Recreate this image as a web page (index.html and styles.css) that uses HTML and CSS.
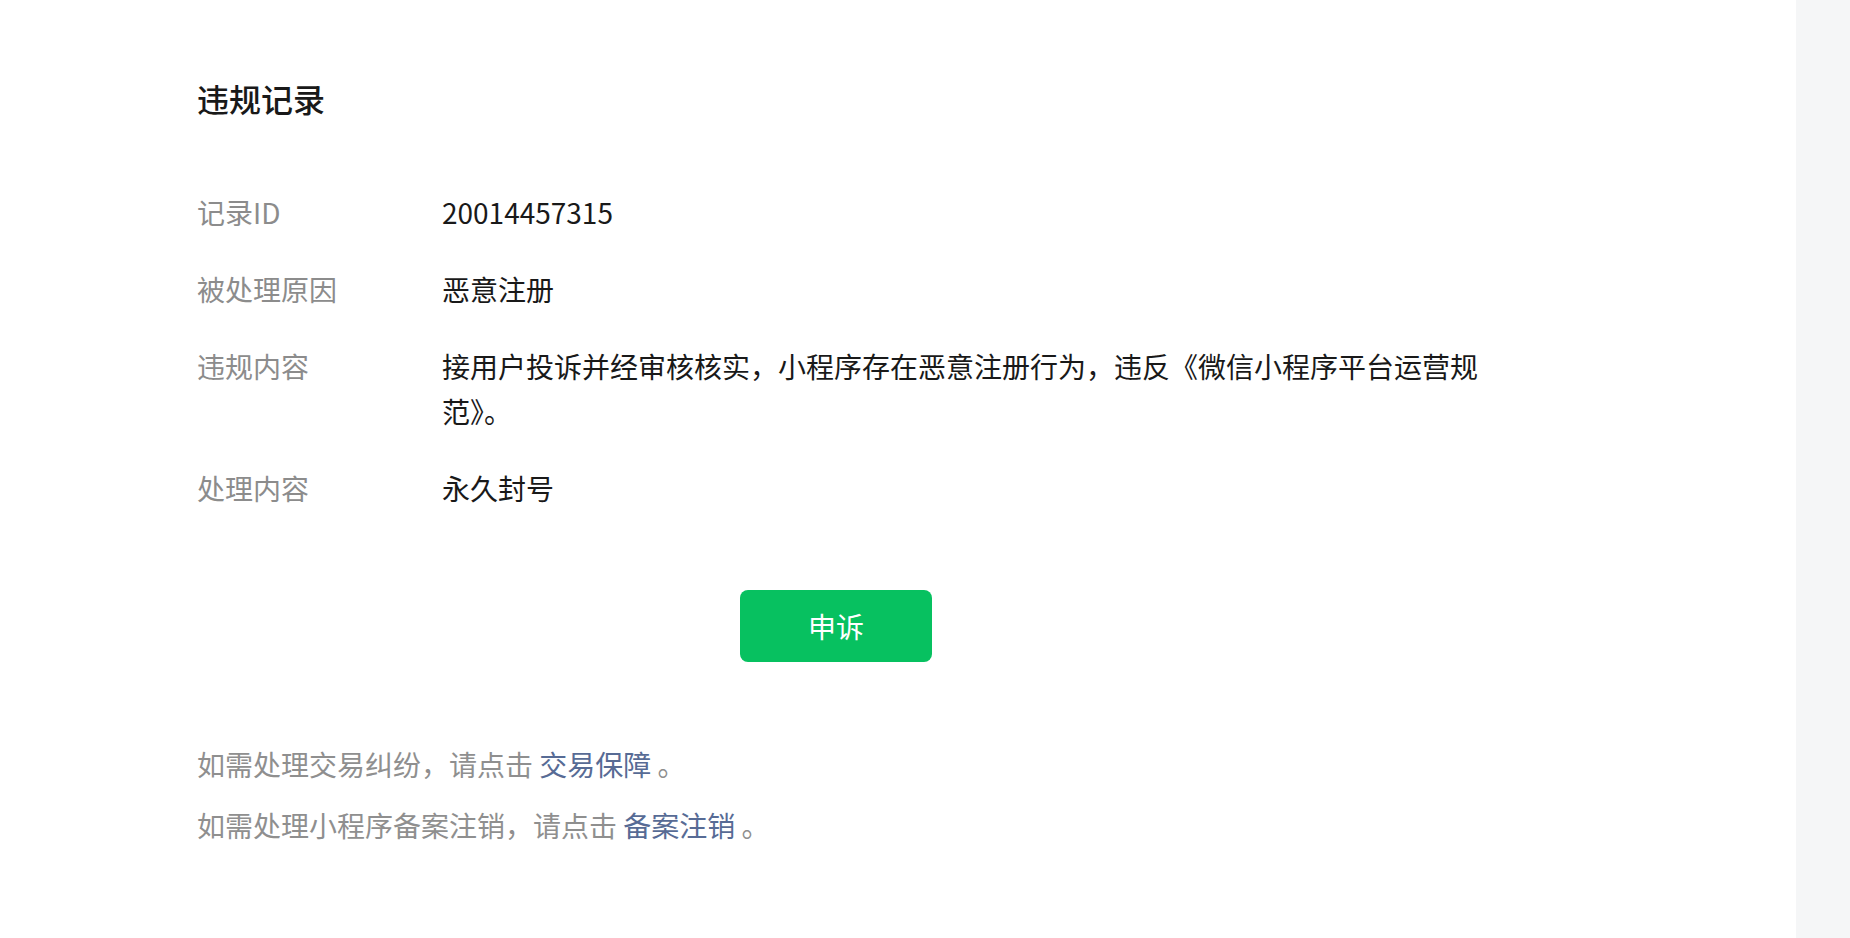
FILE: index.html
```html
<!DOCTYPE html>
<html lang="zh-CN">
<head>
    <meta charset="UTF-8">
    <meta name="viewport" content="width=device-width, initial-scale=1.0">
    <title>违规记录</title>
    <link rel="stylesheet" href="styles.css">
</head>
<body>
    <div class="page">
        <div class="main">
            <div class="content">
                <h2 class="title">违规记录</h2>

                <div class="info">
                    <div class="info-row">
                        <span class="label">记录ID</span>
                        <span class="value">20014457315</span>
                    </div>
                    <div class="info-row">
                        <span class="label">被处理原因</span>
                        <span class="value">恶意注册</span>
                    </div>
                    <div class="info-row">
                        <span class="label">违规内容</span>
                        <span class="value">接用户投诉并经审核核实，小程序存在恶意注册行为，违反《微信小程序平台运营规范》。</span>
                    </div>
                    <div class="info-row">
                        <span class="label">处理内容</span>
                        <span class="value">永久封号</span>
                    </div>
                </div>

                <div class="actions">
                    <button class="btn-primary">申诉</button>
                </div>

                <div class="tips">
                    <p>如需处理交易纠纷，请点击 <a href="#">交易保障</a> 。</p>
                    <p>如需处理小程序备案注销，请点击 <a href="#">备案注销</a> 。</p>
                </div>
            </div>
        </div>
        <div class="side"></div>
    </div>
</body>
</html>
```

FILE: styles.css
```css
body {
    margin: 0;
    font-family: "Noto Sans CJK SC", "Noto Sans", sans-serif;
    color: #191919;
    background-color: #fff;
}
.page {
    display: flex;
    min-height: 100vh;
}
.main {
    flex: 1;
    padding: 76px 0 0 197px;
}
.side {
    width: 54px;
    background-color: #f5f6f7;
}
.content {
    width: 1278px;
}
.title {
    margin: 0;
    font-size: 32px;
    line-height: 45px;
    font-weight: 500;
    color: #191919;
}
.info {
    width: 1305px;
    margin-top: 69px;
}
.info-row {
    display: flex;
    font-size: 28px;
    line-height: 45px;
    margin-bottom: 32px;
}
.info-row:last-child {
    margin-bottom: 0;
}
.label {
    width: 245px;
    flex-shrink: 0;
    color: #8c8c8c;
}
.value {
    flex: 1;
    color: #191919;
}
.actions {
    display: flex;
    justify-content: center;
    margin-top: 79px;
}
.btn-primary {
    width: 192px;
    height: 72px;
    border: none;
    border-radius: 8px;
    background-color: #07c160;
    color: #fff;
    font-family: inherit;
    font-size: 28px;
    cursor: pointer;
}
.tips {
    margin-top: 80px;
    font-size: 28px;
    line-height: 45px;
    color: #8f8f8f;
}
.tips p {
    margin: 0 0 16px;
}
.tips a {
    color: #576b95;
    text-decoration: none;
}
```
